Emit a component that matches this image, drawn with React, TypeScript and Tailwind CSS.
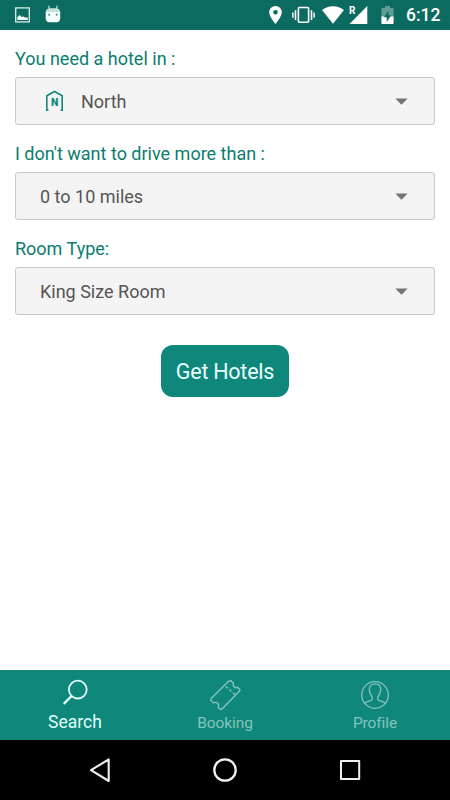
import type { ReactNode } from 'react';

function StatusBar() {
  return (
    <header className="flex h-[30px] shrink-0 items-center bg-[#0c6b60] pr-[10px] pl-[15px] text-white">
      <svg width="15" height="16" viewBox="0 0 15 16" fill="none">
        <rect x="0.7" y="0.9" width="13.6" height="14" stroke="#d9efeb" strokeWidth="1.3" />
        <path d="M2.3 13V10.2L4.6 8L6.6 10L8.4 9.4L10 10.4L12.7 10.4V13Z" fill="#f4fffd" />
      </svg>
      <svg className="mb-0.5 ml-[15px]" width="16" height="18" viewBox="0 0 16 18" fill="none">
        <path d="M3.5 0.8L4.6 4M12.3 0.8L11.2 4" stroke="#c5e2dd" strokeWidth="1.1" />
        <path d="M0.7 7.6Q0.7 3.4 5 3.2H11Q15.2 3.4 15.2 7.6Z" fill="#c5e2dd" />
        <path d="M0.7 7H15.2V13.5Q15 17 11.5 17.2H4.4Q1 17 0.7 13.5Z" fill="#f4fffd" />
        <circle cx="4.2" cy="9.7" r="1" fill="#4f857d" />
        <circle cx="11.6" cy="9.7" r="1" fill="#4f857d" />
      </svg>
      <svg className="ml-auto" width="13" height="18" viewBox="0 0 13 18" fill="white">
        <path fillRule="evenodd" d="M6.5 0A6.3 6.3 0 0 0 .2 6.3C.2 11 6.5 18 6.5 18S12.8 11 12.8 6.3A6.3 6.3 0 0 0 6.5 0ZM6.5 4A2.3 2.3 0 1 1 6.5 8.6A2.3 2.3 0 0 1 6.5 4Z" />
      </svg>
      <svg className="ml-[10px]" width="23" height="18" viewBox="0 0 23 18" fill="none" stroke="white">
        <rect x="6.4" y="1.5" width="10.2" height="14.8" rx="1" strokeWidth="1.6" />
        <path d="M3.5 4.2V14M19.5 4.2V14" strokeWidth="1.6" />
        <path d="M0.9 6.6V11.7M22.1 6.6V11.7" strokeWidth="1.4" />
      </svg>
      <svg className="ml-[7px]" width="22" height="18" viewBox="0 0 22 18" fill="white">
        <path d="M11 17.8L0 4.1Q4.8 .2 11 .2T22 4.1Z" />
      </svg>
      <div className="relative ml-[5px] h-[18px] w-[19px]">
        <svg width="19" height="18" viewBox="0 0 19 18" fill="white">
          <path d="M18.3 0V18H0.5Z" />
        </svg>
        <span className="absolute top-0 left-0 bg-[#0c6b60] pr-px text-[10px] leading-[10px] font-bold">R</span>
      </div>
      <svg className="ml-[13px]" width="13" height="18" viewBox="0 0 13 18">
        <path d="M1.2 2H4V0H9V2H11.8Q12.6 2 12.6 3V11H.4V3Q.4 2 1.2 2Z" fill="#5e9c94" />
        <path d="M.4 10.5H12.6V17Q12.6 18 11.8 18H1.2Q.4 18 .4 17Z" fill="white" />
        <path d="M7.4 4.4L2.9 11.2H5.7V16L10.2 9.3H7.4Z" fill="#0c6b60" />
      </svg>
      <span className="ml-3 w-[34px] pt-0.5 text-[17.5px] leading-none font-medium whitespace-nowrap">6:12</span>
    </header>
  );
}

function NorthIcon() {
  return (
    <svg className="mr-[17px] ml-[5px]" width="19" height="22" viewBox="0 0 19 22" fill="none">
      <path d="M3.4 20.3H1.8V5.7L9.5 1.5L17.2 5.7V20.3H15.6" stroke="#13877b" strokeWidth="1.6" />
      <text x="9.6" y="16.4" textAnchor="middle" fill="#13877b" className="text-[10.5px] font-black">N</text>
    </svg>
  );
}

function SelectField({ label, value, icon }: { label: string; value: string; icon?: ReactNode }) {
  return (
    <div className="h-[95px]">
      <div className="h-[47px] pt-[17px] text-[18px] leading-6 text-[#0b7d70]">{label}</div>
      <button className="flex h-12 w-full items-center rounded-[3px] border border-[#c9c9c9] bg-[#f4f4f4] pr-[26px] pl-6 text-left text-[18px] text-[#555]">
        {icon}
        <span>{value}</span>
        <svg className="ml-auto" width="13" height="7" viewBox="0 0 13 7" fill="#747474">
          <path d="M0.3 0.5H12.7L6.5 6.7Z" />
        </svg>
      </button>
    </div>
  );
}

function TabBar() {
  return (
    <nav className="grid h-[70px] shrink-0 grid-cols-3 bg-[#0f877b] text-center">
      <div className="flex flex-col items-center pt-[9px] text-[#e0fffa]">
        <svg width="26" height="26" viewBox="0 0 26 26" fill="none" stroke="currentColor">
          <circle cx="15.8" cy="10.6" r="8.9" strokeWidth="1.8" />
          <path d="M9.5 17.1L1.7 24.9" strokeWidth="2.2" />
        </svg>
        <span className="mt-[7px] text-[17.5px] leading-5">Search</span>
      </div>
      <div className="flex flex-col items-center pt-2.5 text-[#84c4bc]">
        <svg width="32" height="31" viewBox="0 0 32 31" fill="none" stroke="currentColor" strokeWidth="1.4" strokeLinejoin="round">
          <path d="M19.3 1.5L22 .8L24.4 3.2Q23.6 6 25.5 7.1Q27 8.2 28.5 7.2L30.9 9.5L30.5 11L13.3 28.7L11.5 29.6L9.2 27.4Q10.2 24.6 8.6 23.2Q7 21.8 4.5 22.9L1.8 20.3L2.1 18.5Z" />
          <path d="M16.7 6.5L26.1 14.4" strokeDasharray="2.6 2.2" />
        </svg>
        <span className="mt-[3px] text-[15.5px] leading-[18px] tracking-[-0.1px]">Booking</span>
      </div>
      <div className="flex flex-col items-center pt-2.5 text-[#84c4bc]">
        <svg width="30" height="31" viewBox="0 0 30 31" fill="none" stroke="currentColor" strokeWidth="1.3">
          <circle cx="15" cy="15" r="13.3" />
          <path d="M4.4 23.5C6.2 21.7 9.2 21 11.2 20.3C12.6 19.7 12.6 17.3 11.6 16C10.4 14.4 9.3 12.1 9.3 9.5C9.3 6 11.5 3.8 15 3.8S20.7 6 20.7 9.5C20.7 12.1 19.6 14.4 18.4 16C17.4 17.3 17.4 19.7 18.8 20.3C20.8 21 23.8 21.7 25.6 23.5" />
        </svg>
        <span className="mt-[3px] text-[15.5px] leading-[18px] tracking-[-0.1px]">Profile</span>
      </div>
    </nav>
  );
}

function SystemNav() {
  return (
    <footer className="flex h-[60px] shrink-0 items-center justify-between bg-black px-[88px]">
      <svg width="24" height="26" viewBox="0 0 24 26" fill="none" stroke="#f1f1f1" strokeWidth="2.1" strokeLinejoin="round">
        <path d="M20.7 2.4V24L3 13.2Z" />
      </svg>
      <svg width="26" height="26" viewBox="0 0 26 26" fill="none" stroke="#f1f1f1" strokeWidth="2.3">
        <circle cx="13" cy="13" r="10.7" />
      </svg>
      <svg width="24" height="26" viewBox="0 0 24 26" fill="none" stroke="#f1f1f1" strokeWidth="2" strokeLinejoin="round">
        <rect x="3" y="4" width="18.2" height="18" />
      </svg>
    </footer>
  );
}

export default function App() {
  return (
    <div className="flex h-[800px] w-[450px] flex-col overflow-hidden bg-white font-['Roboto',sans-serif]">
      <StatusBar />
      <main className="flex flex-1 flex-col px-[15px]">
        <SelectField label="You need a hotel in :" value="North" icon={<NorthIcon />} />
        <SelectField label="I don't want to drive more than :" value="0 to 10 miles" />
        <SelectField label="Room Type:" value="King Size Room" />
        <button className="mt-[30px] h-[52px] w-[128px] self-center rounded-xl bg-[#0f877b] pt-[3px] text-[21.5px] tracking-[-0.25px] text-[#e8fffb]">
          Get Hotels
        </button>
      </main>
      <TabBar />
      <SystemNav />
    </div>
  );
}
